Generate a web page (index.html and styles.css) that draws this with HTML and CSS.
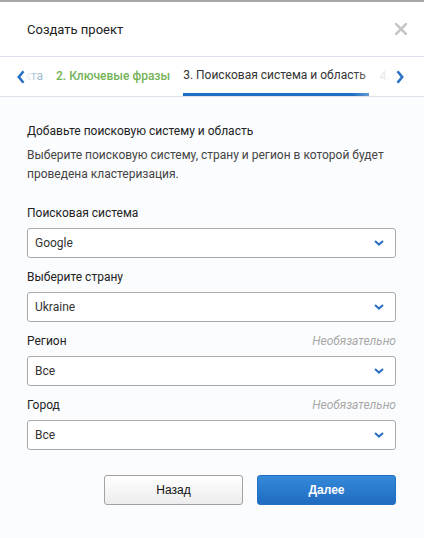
FILE: index.html
```html
<!DOCTYPE html>
<html lang="ru">
<head>
<meta charset="utf-8">
<title>Создать проект</title>
<link rel="stylesheet" href="styles.css">
</head>
<body>
<div class="modal">
  <div class="header">
    <div class="title">Создать проект</div>
    <svg class="close" width="12" height="12" viewBox="0 0 12 12"><path d="M1 1L11 11M11 1L1 11" stroke="#c6c6c6" stroke-width="2.6" stroke-linecap="square"/></svg>
  </div>
  <div class="tabs">
    <div class="tab-prev"><span class="tab tab-done-old">1. Название проекта</span></div>
    <span class="tab tab-done">2. Ключевые фразы</span>
    <span class="tab tab-active">3. Поисковая система и область</span>
    <span class="tab tab-next">4. Создание</span>
    <div class="fade fade-left">
      <svg width="8" height="14" viewBox="0 0 8 14"><path d="M6.5 1.2L1.8 7L6.5 12.8" fill="none" stroke="#2a72c4" stroke-width="2.6"/></svg>
    </div>
    <div class="fade fade-right">
      <svg width="8" height="14" viewBox="0 0 8 14"><path d="M1.5 1.2L6.2 7L1.5 12.8" fill="none" stroke="#2a72c4" stroke-width="2.6"/></svg>
    </div>
  </div>
  <div class="content">
    <div class="heading">Добавьте поисковую систему и область</div>
    <div class="desc">Выберите поисковую систему, страну и регион в которой будет проведена кластеризация.</div>
    <div class="fields">
      <div class="field">
        <div class="label-row"><span class="label">Поисковая система</span></div>
        <div class="select"><span>Google</span><svg width="10" height="6" viewBox="0 0 10 6"><path d="M1 1L5 4.6L9 1" fill="none" stroke="#2a72c4" stroke-width="2"/></svg></div>
      </div>
      <div class="field">
        <div class="label-row"><span class="label">Выберите страну</span></div>
        <div class="select"><span>Ukraine</span><svg width="10" height="6" viewBox="0 0 10 6"><path d="M1 1L5 4.6L9 1" fill="none" stroke="#2a72c4" stroke-width="2"/></svg></div>
      </div>
      <div class="field">
        <div class="label-row"><span class="label">Регион</span><span class="optional">Необязательно</span></div>
        <div class="select"><span>Все</span><svg width="10" height="6" viewBox="0 0 10 6"><path d="M1 1L5 4.6L9 1" fill="none" stroke="#2a72c4" stroke-width="2"/></svg></div>
      </div>
      <div class="field">
        <div class="label-row"><span class="label">Город</span><span class="optional">Необязательно</span></div>
        <div class="select"><span>Все</span><svg width="10" height="6" viewBox="0 0 10 6"><path d="M1 1L5 4.6L9 1" fill="none" stroke="#2a72c4" stroke-width="2"/></svg></div>
      </div>
    </div>
    <div class="buttons">
      <button class="btn btn-back">Назад</button>
      <button class="btn btn-next">Далее</button>
    </div>
  </div>
</div>
</body>
</html>
```
FILE: styles.css
```css
* { box-sizing: border-box; }
html, body { margin: 0; padding: 0; }
body {
  font-family: Roboto, "Liberation Sans", Arial, sans-serif;
  font-size: 12px;
  color: #222;
  background: #fbfcfe;
}
.modal {
  width: 424px;
  height: 538px;
  border-top: 2px solid #a9a9a9;
  background: #fbfcfe;
}
.header {
  height: 55px;
  background: #fff;
  border-bottom: 1px solid #dce2ec;
  display: flex;
  align-items: center;
  justify-content: space-between;
  padding: 0 17px 0 27px;
}
.title {
  font-size: 13px;
  color: #222;
}
.close { display: block; }
.tabs {
  position: relative;
  height: 40px;
  background: #fff;
  border-bottom: 1px solid #dce2ec;
  display: flex;
  overflow: hidden;
  white-space: nowrap;
}
.tab-prev {
  flex: none;
  width: 43px;
  display: flex;
  justify-content: flex-end;
}
.tab {
  flex: none;
  height: 39px;
  line-height: 39px;
  font-size: 12px;
}
.tab-done-old { color: #9fbcd2; }
.tab-done { color: #74b356; font-weight: 500; margin-left: 13px; }
.tab-active {
  color: #333;
  margin-left: 13px;
  border-bottom: 3px solid #1f6dc2;
  line-height: 36px;
  padding-right: 3px;
}
.tab-next { color: #c4c4c4; margin-left: 11px; }
.fade {
  position: absolute;
  top: 0;
  bottom: 0;
  display: flex;
  align-items: center;
}
.fade svg { display: block; }
.fade-left {
  left: 0;
  width: 36px;
  padding-left: 17px;
  background: linear-gradient(to right, #fff 0, #fff 25px, rgba(255,255,255,0.5) 30px, rgba(255,255,255,0) 36px);
}
.fade-right {
  right: 0;
  width: 72px;
  justify-content: flex-end;
  padding-right: 20px;
  background: linear-gradient(to left, #fff 0, #fff 28px, rgba(255,255,255,0.5) 44px, rgba(255,255,255,0) 72px);
}
.content {
  padding: 25px 28px 0 27px;
}
.heading {
  line-height: 19px;
  color: #222;
}
.desc {
  margin-top: 5px;
  line-height: 19px;
  color: #444;
}
.fields {
  margin-top: 20px;
  display: flex;
  flex-direction: column;
  gap: 10px;
}
.label-row {
  display: flex;
  justify-content: space-between;
  line-height: 19px;
  margin-bottom: 5px;
}
.label { color: #222; }
.optional { color: #a8a8a8; font-style: italic; }
.select {
  height: 30px;
  background: #fff;
  border: 1px solid #aaa;
  border-radius: 3px;
  display: flex;
  align-items: center;
  justify-content: space-between;
  padding: 0 11px 0 7px;
  color: #333;
}
.select svg { display: block; }
.buttons {
  margin-top: 25px;
  display: flex;
  justify-content: flex-end;
  gap: 14px;
}
.btn {
  width: 139px;
  height: 30px;
  border-radius: 3px;
  font-family: "Liberation Sans", Arial, sans-serif;
  font-size: 12px;
  cursor: pointer;
}
.btn-back {
  background: linear-gradient(#ffffff, #ececec);
  border: 1px solid #a2a2a2;
  color: #111;
}
.btn-next {
  background: linear-gradient(#3589d9, #1f6cc1);
  border: 1px solid #2271c4;
  color: #fff;
  font-weight: bold;
}
```
